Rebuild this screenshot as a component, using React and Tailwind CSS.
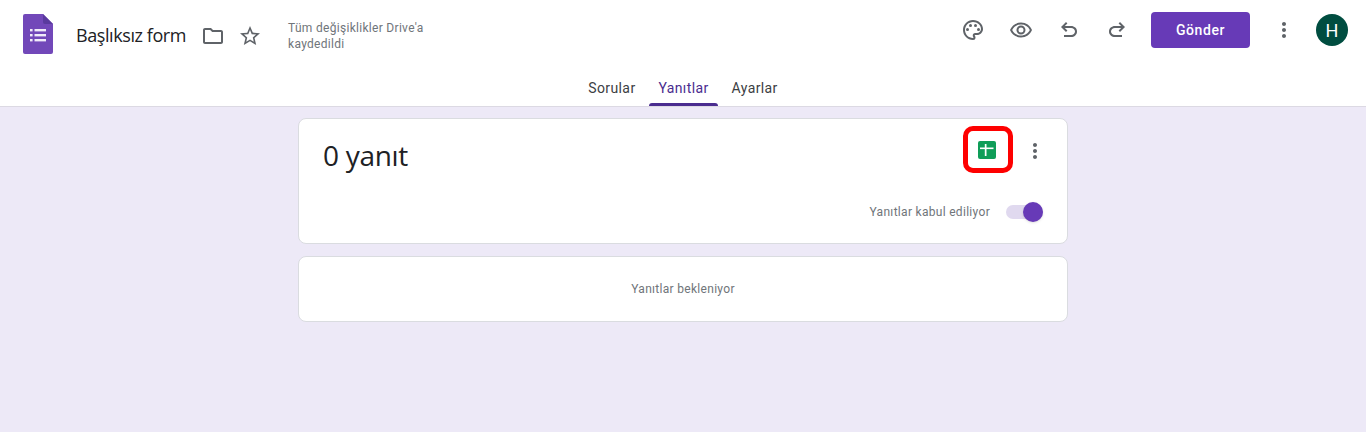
import {
  MdOutlineFolder,
  MdStarBorder,
  MdOutlinePalette,
  MdOutlineRemoveRedEye,
  MdMoreVert,
} from "react-icons/md";

function FormsLogo() {
  return (
    <svg width="30" height="40" viewBox="0 0 30 40">
      <path d="M2 0H20L30 10V38a2 2 0 0 1-2 2H2a2 2 0 0 1-2-2V2a2 2 0 0 1 2-2z" fill="#7248b9" />
      <path d="M20 0L30 10H22a2 2 0 0 1-2-2z" fill="#5a3a9e" />
      <g fill="#f1ecf9">
        <rect x="7" y="15" width="2.6" height="2.4" />
        <rect x="7" y="20" width="2.6" height="2.4" />
        <rect x="7" y="25" width="2.6" height="2.4" />
        <rect x="11.5" y="15" width="11.5" height="2.4" />
        <rect x="11.5" y="20" width="11.5" height="2.4" />
        <rect x="11.5" y="25" width="11.5" height="2.4" />
      </g>
    </svg>
  );
}

function UndoIcon({ className }) {
  return (
    <svg className={className} width="24" height="24" viewBox="0 0 24 24" fill="currentColor">
      <path d="M7 19v-2h7.1c1.05 0 1.96-.33 2.74-1 .77-.67 1.16-1.5 1.16-2.5s-.39-1.83-1.16-2.5c-.78-.67-1.69-1-2.74-1H7.8l2.6 2.6L9 14 4 9l5-5 1.4 1.4L7.8 8h6.3c1.62 0 3 .53 4.16 1.58C19.42 10.63 20 11.93 20 13.5s-.58 2.87-1.74 3.93C17.1 18.47 15.72 19 14.1 19H7z" />
    </svg>
  );
}

function SheetsIcon() {
  return (
    <svg className="mr-[2px]" width="18" height="18" viewBox="0 0 18 18">
      <rect width="18" height="18" rx="2" fill="#0f9d58" />
      <rect x="2" y="6.5" width="13.5" height="1.6" fill="#fff" />
      <rect x="6.8" y="3" width="1.7" height="12" fill="#fff" />
    </svg>
  );
}

export default function App() {
  return (
    <div className="h-[432px] bg-[#ede9f7] font-['Roboto',sans-serif] overflow-hidden">
      <header className="h-[107px] bg-white border-b border-[#dcd9e3] flex flex-col">
        <div className="h-[70px] flex items-start pl-[23px] pr-[18px]">
          <div className="flex items-center h-[40px] mt-[14px]">
            <FormsLogo />
            <span className="ml-[23px] mt-[2px] text-[18px] text-[#202124] font-['Open_Sans',sans-serif] tracking-[-0.42px]">Başlıksız form</span>
            <MdOutlineFolder className="ml-[15px] mt-[3px] text-[#5f6368]" size={24} />
            <MdStarBorder className="ml-[13px] mt-[3px] text-[#5f6368]" size={24} />
            <p className="ml-[26px] mt-[4px] w-[150px] text-[12px] leading-[16px] tracking-[0.3px] text-[#70757a]">Tüm değişiklikler Drive'a kaydedildi</p>
          </div>
          <div className="ml-auto mt-[12px] flex items-center text-[#5f6368]">
            <MdOutlinePalette size={24} />
            <MdOutlineRemoveRedEye className="ml-[24px]" size={24} />
            <UndoIcon className="ml-[24px]" />
            <UndoIcon className="ml-[24px] -scale-x-100" />
            <button className="ml-[22px] w-[99px] h-[36px] rounded-[4px] bg-[#673ab7] text-white text-[14px] font-medium tracking-[0.6px]">Gönder</button>
            <MdMoreVert className="ml-[22px]" size={24} />
            <div className="ml-[20px] w-[32px] h-[32px] rounded-full bg-[#004d40] flex items-center justify-center text-white text-[18px]">H</div>
          </div>
        </div>
        <nav className="flex-1 flex justify-center items-stretch text-[14px] tracking-[0.4px]">
          <span className="pl-[13px] pr-[12px] pt-[8px] text-[#3c4043]">Sorular</span>
          <span className="relative ml-[1px] mr-[3px] w-[69px] pl-[1px] text-center pt-[8px] text-[#4a2c8f]">
            Yanıtlar
            <span className="absolute left-0 right-0 bottom-0 h-[3px] rounded-t-[3px] bg-[#4a2c8f]" />
          </span>
          <span className="pl-[11px] pr-[13px] pt-[8px] text-[#3c4043]">Ayarlar</span>
        </nav>
      </header>

      <main className="w-[770px] mx-auto pt-[11px] flex flex-col gap-[12px]">
        <section className="h-[126px] bg-white rounded-[8px] border border-[#dadce0] flex flex-col pl-[24px] pr-[24px]">
          <div className="flex items-start">
            <h1 className="mt-[16px] text-[28px] leading-[40px] text-[#202124] font-['Open_Sans',sans-serif] font-normal tracking-[-0.3px]">0 yanıt</h1>
            <div className="ml-auto mt-[7px] w-[50px] h-[47px] rounded-[10px] border-[5px] border-[#fe0000] flex items-center justify-center">
              <SheetsIcon />
            </div>
            <MdMoreVert className="ml-[10px] mt-[20px] mr-[-4px] text-[#5f6368]" size={24} />
          </div>
          <div className="mt-[28px] flex items-center justify-end">
            <span className="text-[12px] tracking-[0.3px] text-[#70757a]">Yanıtlar kabul ediliyor</span>
            <div className="relative ml-[16px] w-[37px] h-[14px] rounded-full bg-[#e0d9ef]">
              <span className="absolute right-0 top-[-3px] w-[20px] h-[20px] rounded-full bg-[#673ab7] shadow-sm" />
            </div>
          </div>
        </section>
        <section className="h-[66px] bg-white rounded-[8px] border border-[#dadce0] flex items-center justify-center">
          <span className="text-[12px] tracking-[0.3px] text-[#70757a]">Yanıtlar bekleniyor</span>
        </section>
      </main>
    </div>
  );
}
